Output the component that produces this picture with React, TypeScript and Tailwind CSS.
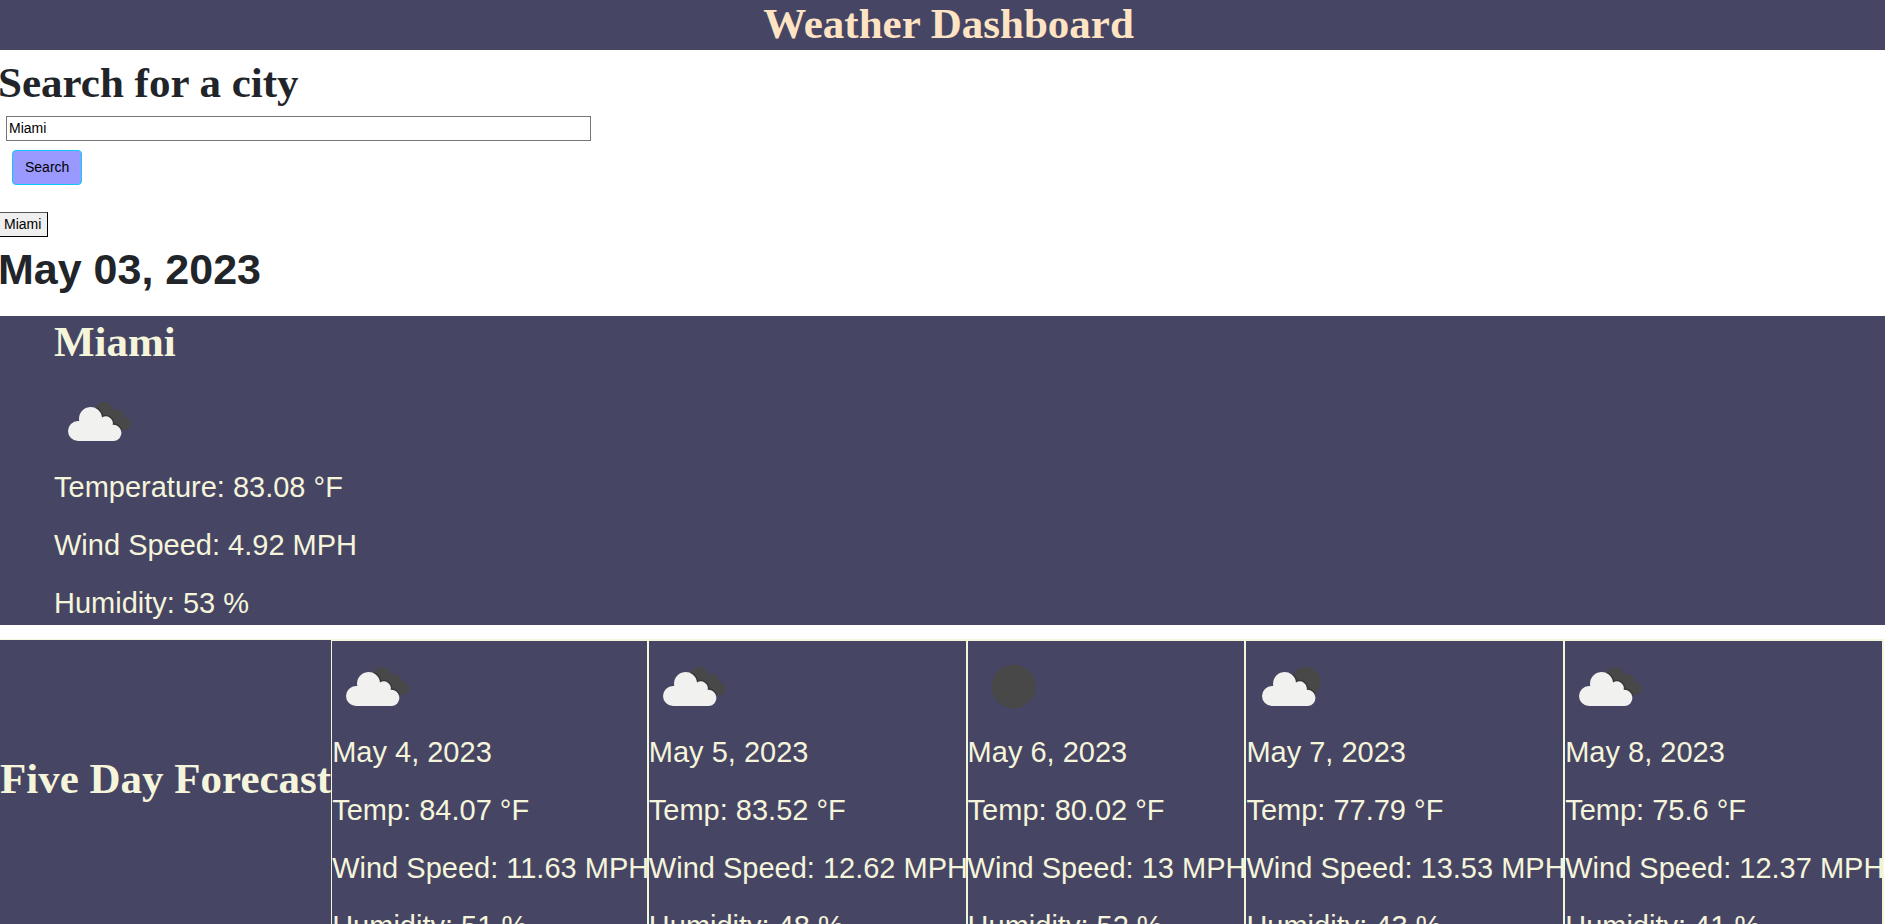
type Sky = "clouds" | "clear" | "few";

type Day = { date: string; sky: Sky; temp: string; wind: string; humidity: string };

const days: Day[] = [
  { date: "May 4, 2023", sky: "clouds", temp: "84.07", wind: "11.63", humidity: "51" },
  { date: "May 5, 2023", sky: "clouds", temp: "83.52", wind: "12.62", humidity: "48" },
  { date: "May 6, 2023", sky: "clear", temp: "80.02", wind: "13", humidity: "52" },
  { date: "May 7, 2023", sky: "few", temp: "77.79", wind: "13.53", humidity: "43" },
  { date: "May 8, 2023", sky: "clouds", temp: "75.6", wind: "12.37", humidity: "41" },
];

const cloudPath =
  "M24 65 A10 10 0 0 1 24 45 L25.3 45 A11.5 11.5 0 1 1 48 41.6 A7 7 0 0 1 58.7 48.9 A8 8 0 0 1 60 65 Z";

function WeatherIcon({ sky }: { sky: Sky }) {
  const shift = sky === "few" ? "translate(2 0)" : undefined;
  return (
    <svg className="block size-[90px]" viewBox="0 0 90 90" aria-hidden="true">
      {sky === "clear" && <circle cx="45.7" cy="45.5" r="22" fill="#484848" />}
      {sky === "few" && <circle cx="59.5" cy="41.2" r="15.2" fill="#484848" />}
      {sky === "clouds" && (
        <g fill="#484848">
          <circle cx="50" cy="35.2" r="9.2" />
          <circle cx="62.5" cy="40.3" r="7" />
          <circle cx="70" cy="47.5" r="6.7" />
          <path d="M48 38 L60 38 L68 46 L68 54 L60 52 Z" />
        </g>
      )}
      {sky !== "clear" && (
        <>
          <clipPath id={`shade-${sky}`}>
            {sky === "few" ? (
              <circle cx="59.5" cy="41.2" r="15.2" />
            ) : (
              <path d="M41 35 A9.2 9.2 0 0 1 59 34 L70 40 L77 48 L70 54.2 L40 50 Z" />
            )}
          </clipPath>
          <g clipPath={`url(#shade-${sky})`}>
            <path d={cloudPath} transform={shift} fill="none" stroke="#38383a" strokeWidth="3" />
          </g>
          <path d={cloudPath} transform={shift} fill="#f1f1f0" />
        </>
      )}
    </svg>
  );
}

export default function App() {
  return (
    <div className="overflow-x-hidden bg-white font-['Liberation_Sans',Arial,sans-serif] text-[29px] leading-[43px] text-[#212529]">
      <header className="bg-[#474564] pb-0.5 pl-3 text-center text-[#ffe4c4]">
        <h1 className="font-['Liberation_Serif','Times_New_Roman',serif] text-[43px] leading-[48px] font-bold">
          Weather Dashboard
        </h1>
      </header>

      <form className="flex flex-col items-start" onSubmit={(e) => e.preventDefault()}>
        <label
          htmlFor="city"
          className="-ml-0.5 pt-2 pb-2 font-['Liberation_Serif','Times_New_Roman',serif] text-[43px] leading-[50px] font-bold"
        >
          Search for a city
        </label>
        <input
          id="city"
          type="text"
          defaultValue="Miami"
          className="ml-1.5 h-[25px] w-[585px] border border-[#767676] px-0.5 pb-0.5 text-sm text-black outline-none"
        />
        <button
          type="submit"
          className="mt-[9px] ml-3 h-[35px] rounded border border-[#0dcaf0] bg-[#9999ff] px-3 pb-0.5 text-sm text-black"
        >
          Search
        </button>
      </form>

      <div className="mt-[27px] flex">
        <button
          type="button"
          className="-ml-1 h-[25px] border border-t-[#555] border-r-black border-b-black border-l-[#555] bg-[#efefef] pr-1.5 pb-0.5 pl-[7px] text-sm text-black"
        >
          Miami
        </button>
      </div>
      <h2 className="-ml-0.5 pt-[6px] pb-[21px] text-[43px] leading-[52px] font-bold">May 03, 2023</h2>

      <main>
        <section className="bg-[#474564] pl-[54px] text-[#f5f5dc]">
          <h2 className="pb-2 font-['Liberation_Serif','Times_New_Roman',serif] text-[43px] leading-[52px] font-bold">
            Miami
          </h2>
          <WeatherIcon sky="clouds" />
          <div className="flex flex-col gap-[15px]">
            <p>Temperature: 83.08 °F</p>
            <p>Wind Speed: 4.92 MPH</p>
            <p>Humidity: 53 %</p>
          </div>
        </section>

        <section className="mt-3.5 mr-px flex items-stretch border-t border-r border-[#f5f5dc] bg-[#474564] text-[#f5f5dc]">
          <h2 className="flex shrink-0 items-center pb-8 font-['Liberation_Serif','Times_New_Roman',serif] text-[43px] leading-[52px] font-bold whitespace-nowrap">
            Five Day Forecast
          </h2>
          {days.map((d) => (
            <article key={d.date} className="min-w-0 flex-auto border border-[#f5f5dc] whitespace-nowrap">
              <WeatherIcon sky={d.sky} />
              <div className="flex flex-col gap-[15px]">
                <p>{d.date}</p>
                <p>Temp: {d.temp} °F</p>
                <p>Wind Speed: {d.wind} MPH</p>
                <p>Humidity: {d.humidity} %</p>
              </div>
            </article>
          ))}
        </section>
      </main>
    </div>
  );
}
